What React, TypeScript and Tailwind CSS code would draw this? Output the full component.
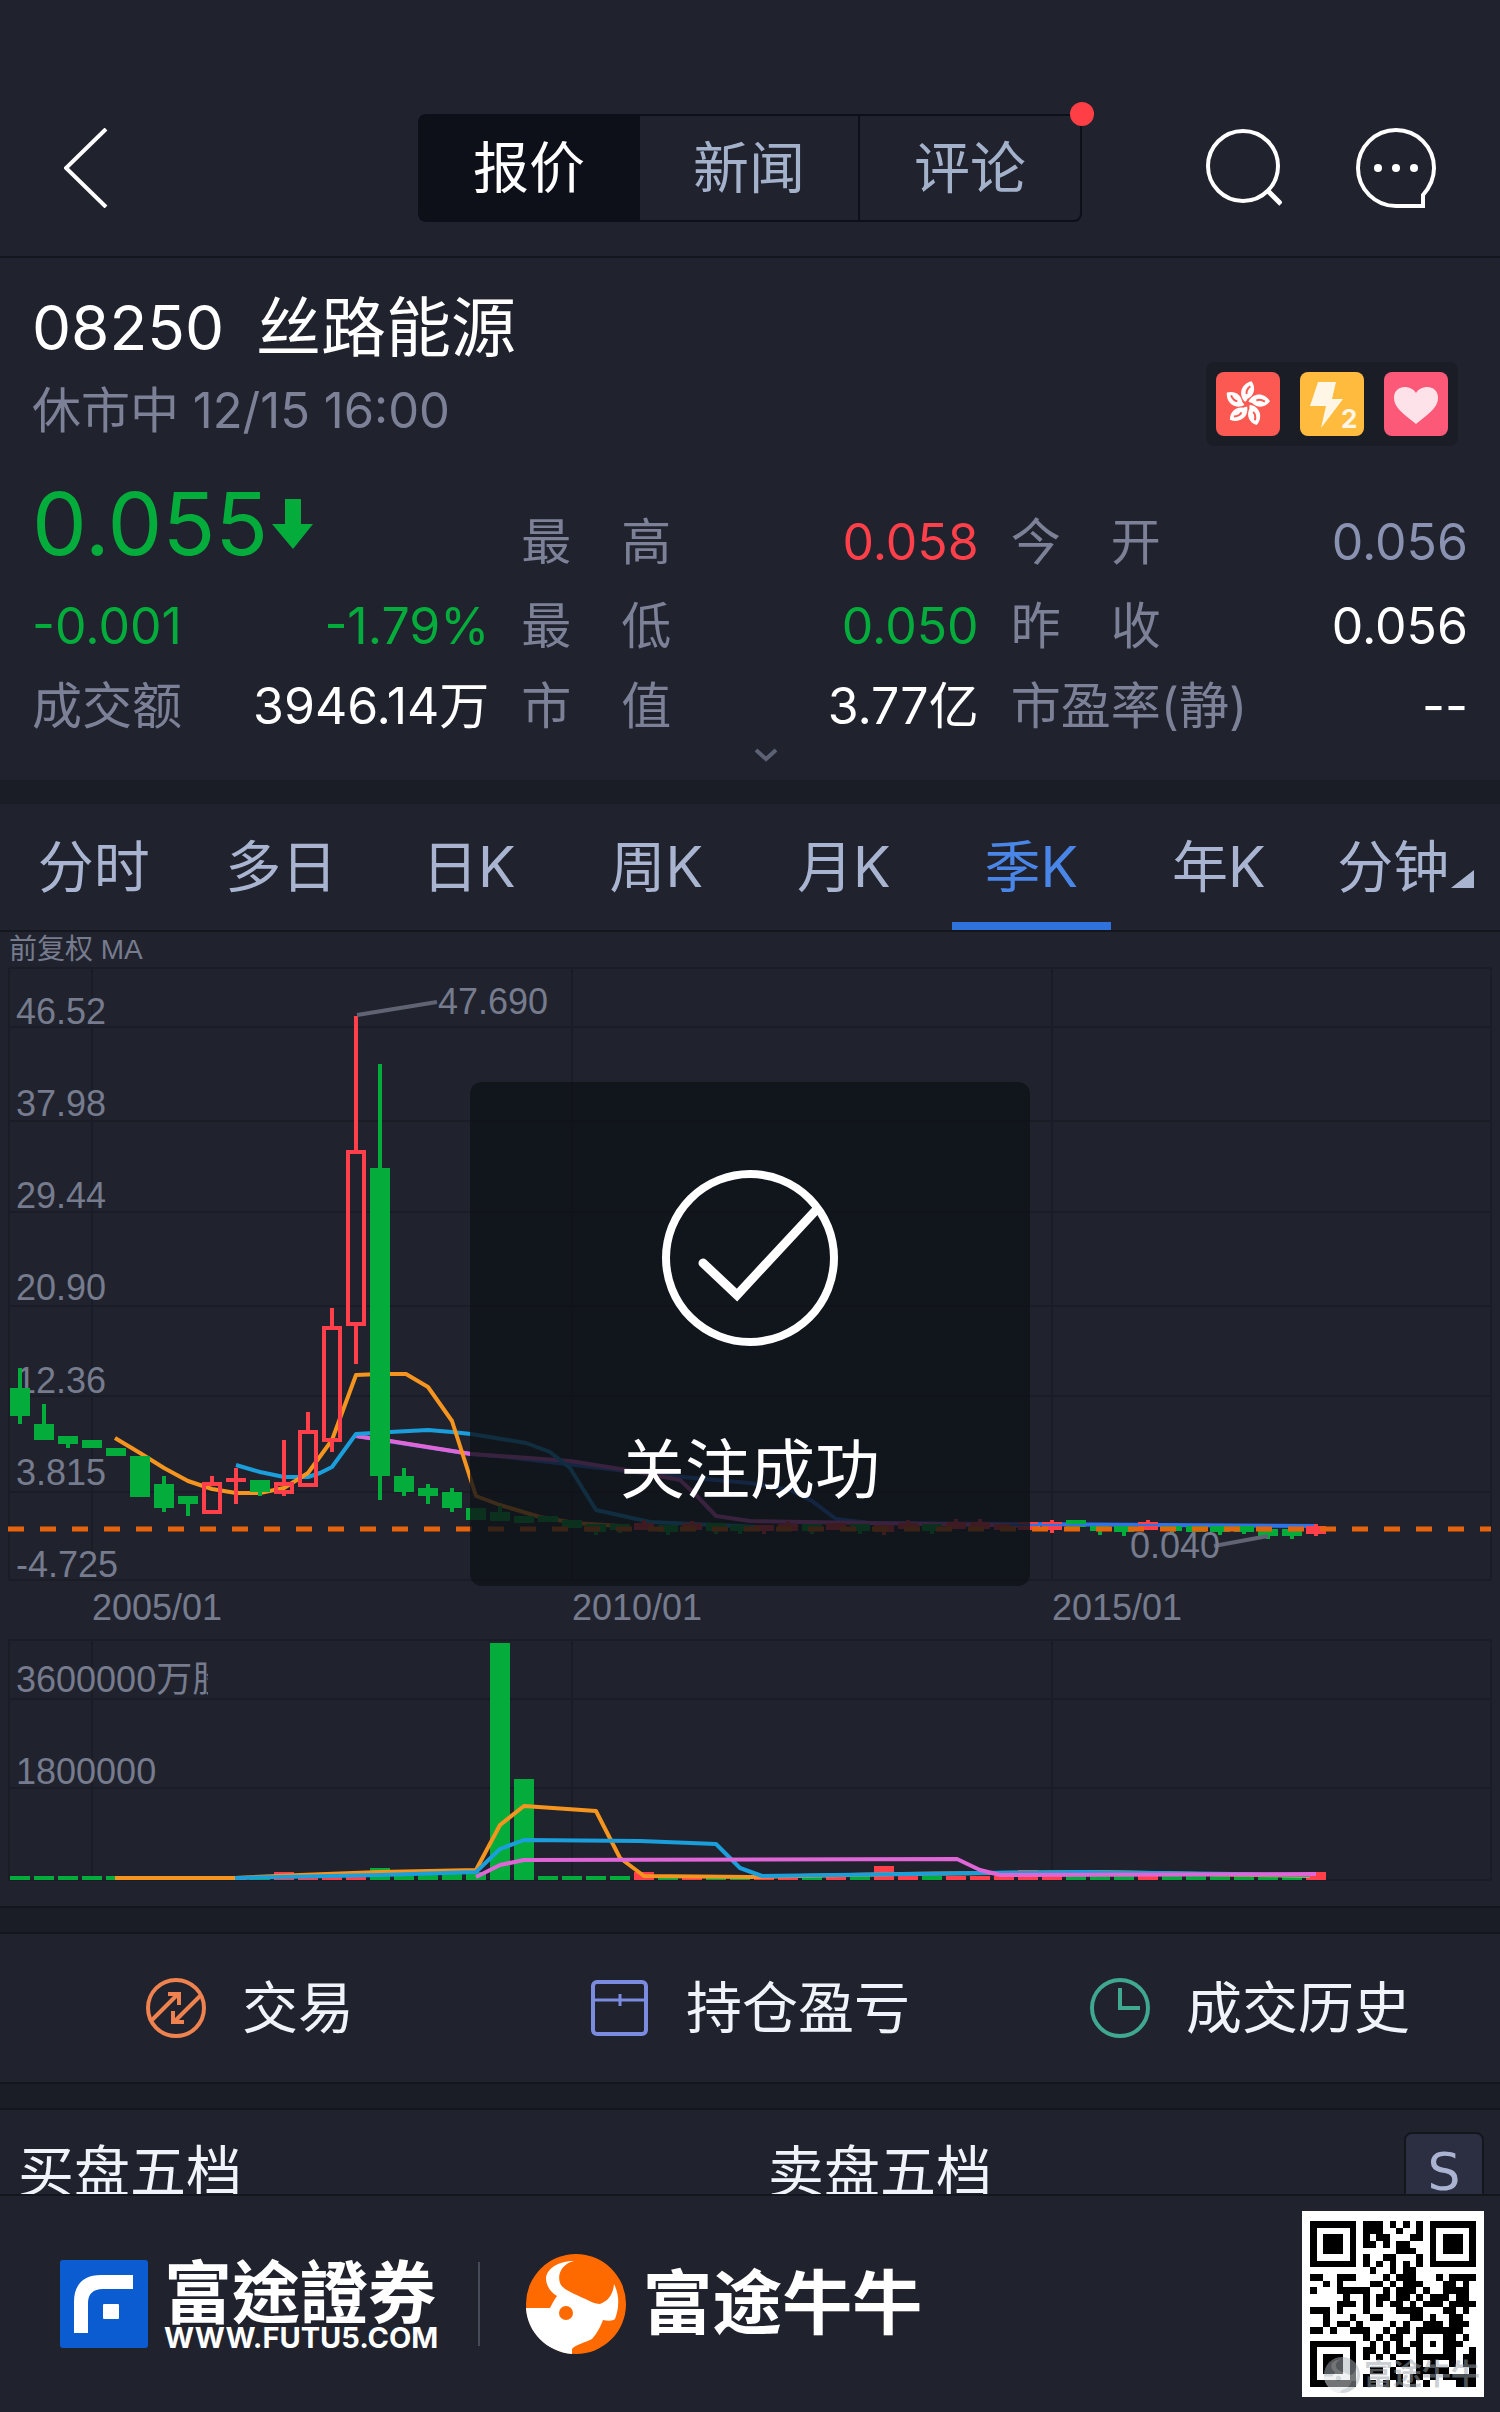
import { useState } from "react";
import type { ReactNode } from "react";

const PERIODS = ["分时", "多日", "日K", "周K", "月K", "季K", "年K"];
const SECTIONS = ["报价", "新闻", "评论"];

const GREEN = "#04ad3b";
const RED = "#ff3f4a";
const ORANGE = "#f59520";
const CYAN = "#1b9fdc";
const PINK = "#e066d8";
const BLUE = "#2f74e6";

const STEP = 24;
const FIRST_X = 20;

type Candle = {
  up?: boolean;
  solid?: boolean;
  top: number;
  bottom: number;
  high?: number;
  low?: number;
};

const candles: Candle[] = [
  { top: 1388, bottom: 1416, high: 1368, low: 1424 },
  { top: 1424, bottom: 1440, high: 1404 },
  { top: 1436, bottom: 1444, low: 1448 },
  { top: 1440, bottom: 1448 },
  { top: 1448, bottom: 1456 },
  { top: 1456, bottom: 1497 },
  { top: 1484, bottom: 1508, high: 1476, low: 1512 },
  { top: 1496, bottom: 1504, low: 1516 },
  { up: true, top: 1482, bottom: 1514, high: 1476 },
  { up: true, solid: true, top: 1478, bottom: 1482, high: 1468, low: 1504 },
  { top: 1480, bottom: 1492, low: 1496 },
  { up: true, top: 1482, bottom: 1494, high: 1440, low: 1496 },
  { up: true, top: 1430, bottom: 1487, high: 1412 },
  { up: true, top: 1326, bottom: 1442, high: 1308, low: 1452 },
  { up: true, top: 1150, bottom: 1326, high: 1016, low: 1364 },
  { top: 1168, bottom: 1476, high: 1064, low: 1500 },
  { top: 1476, bottom: 1492, high: 1468, low: 1496 },
  { top: 1488, bottom: 1496, high: 1484, low: 1504 },
  { top: 1492, bottom: 1508, high: 1488, low: 1512 },
  { top: 1508, bottom: 1520 },
  { top: 1512, bottom: 1521, high: 1506 },
  { top: 1516, bottom: 1523 },
  { top: 1516, bottom: 1522 },
  { top: 1520, bottom: 1528 },
  { top: 1524, bottom: 1532, low: 1535 },
  { top: 1524, bottom: 1530, low: 1533 },
  { up: true, solid: true, top: 1523, bottom: 1530, high: 1520 },
  { top: 1525, bottom: 1532, low: 1535 },
  { up: true, solid: true, top: 1523, bottom: 1530, high: 1521 },
  { top: 1523, bottom: 1531, low: 1534 },
  { top: 1525, bottom: 1531, low: 1534 },
  { up: true, solid: true, top: 1525, bottom: 1531, low: 1534 },
  { up: true, solid: true, top: 1524, bottom: 1531, high: 1521 },
  { top: 1524, bottom: 1531, low: 1534 },
  { up: true, solid: true, top: 1523, bottom: 1530 },
  { top: 1524, bottom: 1531, low: 1534 },
  { up: true, solid: true, top: 1525, bottom: 1532, low: 1535 },
  { up: true, solid: true, top: 1523, bottom: 1529, high: 1520 },
  { top: 1524, bottom: 1531, low: 1534 },
  { up: true, solid: true, top: 1522, bottom: 1529, high: 1519 },
  { up: true, solid: true, top: 1522, bottom: 1529, high: 1519 },
  { up: true, solid: true, top: 1524, bottom: 1530 },
  { up: true, solid: true, top: 1522, bottom: 1530 },
  { up: true, solid: true, top: 1522, bottom: 1530, high: 1520, low: 1533 },
  { top: 1520, bottom: 1527 },
  { top: 1524, bottom: 1531, low: 1535 },
  { top: 1525, bottom: 1532, low: 1536 },
  { up: true, solid: true, top: 1522, bottom: 1530, high: 1520 },
  { top: 1524, bottom: 1531, low: 1534 },
  { top: 1524, bottom: 1532 },
  { top: 1525, bottom: 1532, low: 1535 },
  { top: 1525, bottom: 1532, low: 1534 },
  { top: 1529, bottom: 1536, low: 1539 },
  { top: 1529, bottom: 1536, low: 1539 },
  { up: true, solid: true, top: 1526, bottom: 1534, high: 1524, low: 1536 },
];

// bars that stand above the 4px floor
const volumes: Record<number, number> = {
  11: 8,
  15: 12,
  17: 10,
  18: 7,
  19: 8,
  20: 237,
  21: 101,
  26: 8,
  36: 14,
  42: 10,
  54: 8,
};

const priceLabels = [
  ["46.52", 1024],
  ["37.98", 1116],
  ["29.44", 1208],
  ["20.90", 1300],
  ["12.36", 1393],
  ["3.815", 1485],
  ["-4.725", 1577],
] as const;

const gridRows = [968, 1027, 1121, 1212, 1306, 1396, 1492, 1580];
const volumeRows = [1640, 1699, 1788, 1880];
const gridCols = [9, 92, 572, 1052, 1491];

const QR = [
  "#######.###.#.#.#.#######",
  "#.....#.###..#..#.#.....#",
  "#.###.#.#.##...##.#.###.#",
  "#.###.#.##.#.##...#.###.#",
  "#.###.#......###..#.###.#",
  "#.....#.#..##...#.#.....#",
  "#######.#.#.#.#.#.#######",
  ".........#..#.##.........",
  "##..###....#.###...#.####",
  "..#.#....##.#.###...##.#.",
  "#...#####..#.###.#..####.",
  ".....#..#.##.##.#.###.##.",
  "....###.#.#.##.#.###.####",
  "###.#...#....####...##.#.",
  "..#...#..##....##.#..##..",
  "..#.##.#....#.#..###.###.",
  "##.#..###..#.##.#######..",
  "........#.#.##..#...##.#.",
  "#######..#.#.#.##.#.###..",
  "#.....#.##.#.##.#...##..#",
  "#.###.#.#.#.#...######.##",
  "#.###.#......##.#.#..#.##",
  "#.###.#..##.#...#####...#",
  "#.....#.#...##.##.#.#####",
  "#######.##.#.#.#.#....###",
];

const Header = () => {
  const [active, setActive] = useState("报价");
  return (
    <header className="flex h-[258px] items-center justify-between border-b-2 border-[#14161e] pt-20 pr-16 pl-16">
      <div className="flex flex-1">
        <button aria-label="返回" className="cursor-pointer">
          <svg width="44" height="80" viewBox="0 0 44 80" fill="none">
            <path d="M42 1 2 40l40 39" stroke="#fff" strokeWidth="4" />
          </svg>
        </button>
      </div>
      <nav className="relative flex h-[108px] rounded-lg border-2 border-[#0d1018]">
        {SECTIONS.map((item) => (
          <button
            key={item}
            onClick={() => setActive(item)}
            className={`w-[220px] cursor-pointer border-r-2 border-[#0d1018] text-[56px] leading-none last-of-type:border-r-0 ${
              item === active ? "bg-[#0d1018] text-white" : "text-[#a3b1cb]"
            }`}
          >
            {item}
          </button>
        ))}
        <span className="absolute -top-[14px] -right-[14px] h-6 w-6 rounded-full bg-[#ff3f45]" />
      </nav>
      <div className="flex flex-1 justify-end gap-[74px]">
        <button aria-label="搜索" className="cursor-pointer">
          <svg width="78" height="80" viewBox="0 0 78 80" fill="none" stroke="#fff" strokeWidth="4">
            <circle cx="39" cy="38" r="35" />
            <path d="M63 62 77 76" strokeWidth="5" />
          </svg>
        </button>
        <button aria-label="消息" className="cursor-pointer">
          <svg width="80" height="80" viewBox="0 0 80 80" fill="none">
            <path
              d="M67 78H40A38 38 0 1 1 78 40c0 11-4 19-11 27Z"
              stroke="#fff"
              strokeWidth="4"
            />
            <circle cx="22" cy="40" r="4" fill="#fff" />
            <circle cx="40" cy="40" r="4" fill="#fff" />
            <circle cx="58" cy="40" r="4" fill="#fff" />
          </svg>
        </button>
      </div>
    </header>
  );
};

const Badges = () => (
  <div className="flex h-[84px] items-center gap-5 rounded-lg bg-[#1a1d26] px-[10px]">
    <svg width="64" height="64" viewBox="0 0 64 64">
      <rect width="64" height="64" rx="8" fill="#fc5953" />
      {[0, 72, 144, 216, 288].map((angle) => (
        <g key={angle} transform={`rotate(${angle + 4} 31 32)`}>
          <path d="M29 30C21 23 24 12 34 9c5 6 4 14-3 18 0 1-1 2-2 3Z" fill="#fff" />
          <path d="M30 22c-1-3 1-6 3-8" stroke="#fc5953" strokeWidth="2" fill="none" />
        </g>
      ))}
    </svg>
    <svg width="64" height="64" viewBox="0 0 64 64">
      <rect width="64" height="64" rx="8" fill="#ffbb3d" />
      <path d="M18 10h18l-4 17h11L21 56l5-22H10Z" fill="#fff6e6" />
      <text x="41" y="56" fontSize="26" fontWeight="700" fill="#fff6e6">
        2
      </text>
    </svg>
    <svg width="64" height="64" viewBox="0 0 64 64">
      <rect width="64" height="64" rx="8" fill="#fc5878" />
      <path
        d="M32 52C18 41 10 35 10 26c0-13 16-14 22-5 6-9 22-8 22 5 0 9-8 15-22 26Z"
        fill="#fde3e9"
      />
    </svg>
  </div>
);

type StatProps = {
  label: string;
  value: string;
  spread?: boolean;
  valueClass?: string;
};

const Stat = ({ label, value, spread, valueClass = "text-white" }: StatProps) => (
  <div className="flex items-center justify-between self-end leading-[84px]">
    {spread ? (
      <span className="flex w-[150px] justify-between text-[#7c8198]">
        {label.split("").map((char) => (
          <span key={char}>{char}</span>
        ))}
      </span>
    ) : (
      <span className="text-[#7c8198]">{label}</span>
    )}
    <span className={valueClass}>{value}</span>
  </div>
);

const Quote = () => (
  <section className="px-8 pt-[30px]">
    <div className="flex items-end justify-between pr-[10px]">
      <div>
        <h1 className="flex gap-8 leading-[80px] text-white">
          <span className="text-[62px]">08250</span>
          <span className="text-[65px]">丝路能源</span>
        </h1>
        <p className="mt-2 text-[49px] leading-[70px] text-[#7c8198]">休市中 12/15 16:00</p>
      </div>
      <Badges />
    </div>
    <div className="mt-[38px] grid grid-cols-3 grid-rows-[100px_84px_80px] gap-x-8 text-[50px]">
      <div className="flex items-center gap-1 self-start text-[87px] leading-[80px] text-[#04ad3b]">
        0.055
        <svg width="42" height="50" viewBox="0 0 42 50" fill={GREEN}>
          <path d="M13 0h16v25h12L21 50 0 25h13Z" />
        </svg>
      </div>
      <Stat label="最高" value="0.058" spread valueClass="text-[#ff3f4a]" />
      <Stat label="今开" value="0.056" spread valueClass="text-[#8a92b2]" />
      <div className="flex items-center justify-between leading-[84px] text-[#04ad3b]">
        <span>-0.001</span>
        <span>-1.79%</span>
      </div>
      <Stat label="最低" value="0.050" spread valueClass="text-[#04ad3b]" />
      <Stat label="昨收" value="0.056" spread />
      <Stat label="成交额" value="3946.14万" />
      <Stat label="市值" value="3.77亿" spread />
      <Stat label="市盈率(静)" value="--" />
    </div>
    <button aria-label="展开" className="mx-auto flex h-8 w-14 cursor-pointer justify-end">
      <svg width="24" height="14" viewBox="0 0 24 14" fill="none">
        <path d="m2 2 10 9L22 2" stroke="#5c6175" strokeWidth="4" />
      </svg>
    </button>
  </section>
);

const PeriodTabs = () => {
  const [period, setPeriod] = useState("季K");
  return (
    <nav className="grid h-32 grid-cols-8 border-b-2 border-[#14161e] text-[56px] leading-none text-[#a9b5d0]">
      {PERIODS.map((item) => (
        <button
          key={item}
          onClick={() => setPeriod(item)}
          className={`relative cursor-pointer ${item === period ? "text-[#4a86e8]" : ""}`}
        >
          {item}
          {item === period && (
            <span className="absolute inset-x-[14px] bottom-0 h-2 bg-[#2f72de]" />
          )}
        </button>
      ))}
      <button className="flex cursor-pointer items-center justify-center">
        分钟
        <svg width="26" height="18" viewBox="0 0 26 18" className="mt-6" fill="#a9b5d0">
          <path d="M25 0v18H2Z" />
        </svg>
      </button>
    </nav>
  );
};

const Chart = () => (
  <svg
    viewBox="0 932 1500 974"
    className="block w-full font-['Liberation_Sans','Noto_Sans_CJK_SC',sans-serif]"
    fontSize="36"
    fill="#767b8e"
  >
    <defs>
      <clipPath id="volume-label">
        <rect x="0" y="1640" width="208" height="80" />
      </clipPath>
    </defs>
    <text x="9" y="959" fontSize="28">
      前复权 MA
    </text>
    <g stroke="#1a1d26" strokeWidth="2">
      {[...gridRows, ...volumeRows].map((y) => (
        <line key={y} x1="9" x2="1491" y1={y} y2={y} />
      ))}
      {gridCols.map((x) => (
        <path key={x} d={`M${x} 968V1580M${x} 1640V1880`} />
      ))}
    </g>

    {priceLabels.map(([label, y]) => (
      <text key={label} x="16" y={y}>
        {label}
      </text>
    ))}
    <text x="92" y="1620">2005/01</text>
    <text x="572" y="1620">2010/01</text>
    <text x="1052" y="1620">2015/01</text>
    <text x="16" y="1692" clipPath="url(#volume-label)">
      3600000万股
    </text>
    <text x="16" y="1784">1800000</text>

    <g fill="none" strokeWidth="4" strokeLinejoin="round">
      <polyline
        stroke={BLUE}
        points="356,1436 471,1454 507,1457 660,1475 750,1483 790,1490 812,1501 836,1519 870,1523 1316,1526"
      />
      <polyline
        stroke={PINK}
        points="356,1436 390,1441 471,1454 570,1461 627,1470 680,1480 696,1495 716,1516 750,1521 1040,1526"
      />
      <polyline
        stroke={CYAN}
        points="236,1465 260,1472 284,1477 308,1477 320,1473 332,1467 356,1434 390,1432 428,1430 452,1432 471,1434 526,1443 550,1452 570,1468 596,1510 650,1522 760,1527"
      />
      <polyline
        stroke={ORANGE}
        points="115,1438 140,1453 164,1468 188,1481 212,1489 236,1493 260,1493 284,1488 308,1473 332,1440 356,1375 380,1374 406,1374 428,1387 452,1421 476,1496 500,1505 540,1517 575,1523 620,1526"
      />
    </g>

    {candles.map(({ up, solid, top, bottom, high = top, low = bottom }, i) => {
      const x = FIRST_X + i * STEP;
      const color = up ? RED : GREEN;
      return (
        <g key={i} stroke={color} strokeWidth="4">
          <path d={`M${x} ${high}V${top}M${x} ${bottom}V${low}`} />
          {up && !solid ? (
            <rect x={x - 8} y={top + 2} width="16" height={bottom - top - 4} fill="none" />
          ) : (
            <rect
              x={x - 10}
              y={top}
              width="20"
              height={bottom - top}
              fill={color}
              stroke="none"
            />
          )}
        </g>
      );
    })}

    <path d="M1010 1525H1310" stroke={BLUE} strokeWidth="2" />
    <path d="M8 1529H1491" stroke="#e8640c" strokeWidth="5" strokeDasharray="16 16" />

    <g stroke="#5f6373" strokeWidth="4">
      <path d="M357 1015 437 1002" />
      <path d="M1214 1546 1268 1536" />
    </g>
    <text x="438" y="1014">47.690</text>
    <text x="1130" y="1558">0.040</text>

    {candles.map(({ up }, i) => {
      const height = volumes[i] ?? 4;
      return (
        <rect
          key={i}
          x={FIRST_X + i * STEP - 10}
          y={1880 - height}
          width="20"
          height={height}
          fill={up ? RED : GREEN}
        />
      );
    })}
    <g fill="none" strokeWidth="4" strokeLinejoin="round">
      <polyline
        stroke={ORANGE}
        points="115,1878 235,1878 300,1875 380,1872 476,1870 500,1825 524,1806 596,1811 620,1858 644,1876 750,1877 900,1874 1100,1872 1200,1874 1310,1876"
      />
      <polyline
        stroke={CYAN}
        points="235,1878 380,1875 476,1872 500,1849 524,1840 640,1841 716,1844 740,1868 762,1876 980,1873 1080,1872 1310,1875"
      />
      <polyline
        stroke={PINK}
        points="476,1877 500,1865 524,1860 957,1859 980,1870 1000,1875 1316,1874"
      />
    </g>
  </svg>
);

const Toast = () => (
  <div
    role="status"
    className="absolute top-[150px] left-1/2 flex h-[504px] w-[560px] -translate-x-1/2 flex-col items-center rounded-xl bg-[#0e1118]/80 pt-[88px] text-white"
  >
    <svg width="176" height="176" viewBox="0 0 176 176" fill="none" stroke="#fff">
      <circle cx="88" cy="88" r="84" strokeWidth="8" />
      <path d="m41 93 34 32 80-86" strokeWidth="9" strokeLinecap="round" />
    </svg>
    <p className="mt-[84px] text-[65px] leading-[80px]">关注成功</p>
  </div>
);

const Action = ({ label, children }: { label: string; children: ReactNode }) => (
  <button className="flex cursor-pointer items-center justify-center gap-9 text-[56px] leading-none text-[#f1f3fa]">
    <svg width="60" height="60" viewBox="0 0 60 60" fill="none" strokeWidth="4">
      {children}
    </svg>
    {label}
  </button>
);

const Actions = () => (
  <div className="grid h-[148px] grid-cols-3">
    <Action label="交易">
      <g stroke="#f0824f">
        <circle cx="30" cy="30" r="28" />
        <path d="M6 42 32 16M22 16h11v11M54 18 28 44M38 44H27V33" />
      </g>
    </Action>
    <Action label="持仓盈亏">
      <g stroke="#7b8be0">
        <rect x="3" y="4" width="53" height="52" rx="4" />
        <path d="M4 22H56" strokeWidth="3" />
        <path d="M30 16V28" strokeWidth="3" />
      </g>
    </Action>
    <Action label="成交历史">
      <g stroke="#3fa88f">
        <circle cx="30" cy="30" r="28" />
        <path d="M30 10V30H50" />
      </g>
    </Action>
  </div>
);

const OrderBook = () => (
  <div className="flex h-[84px] items-start overflow-hidden pt-[22px] text-[56px] leading-[80px] text-[#f1f3fa]">
    <h2 className="w-1/2 pl-[18px]">买盘五档</h2>
    <h2 className="w-1/2 pl-[18px]">卖盘五档</h2>
    <button className="mr-4 -ml-24 h-20 w-20 shrink-0 cursor-pointer rounded-lg border-2 border-[#14161e] bg-[#2b2f41] font-['DejaVu_Sans',sans-serif] text-[52px] leading-[76px] text-[#aab4d2]">
      S
    </button>
  </div>
);

const BullMark = ({ className, disc, mark }: { className: string; disc: string; mark: string }) => (
  <svg className={className} viewBox="0 0 100 100">
    <circle cx="50" cy="50" r="50" fill={disc} />
    <path
      d="M48 7C36 10 31 20 34 29c3 7 13 10 23 15 7 3 12 6 17 6 8-3 13-9 14-20 6 12 5 24 1 35-2 2-7 2-12 1-3 8-6 13-11 19-7 4-16 5-20 10v5C21 98 1 78 0 54h24c2-4 4-8 7-12-7-4-11-11-11-18C21 14 33 7 48 7Z"
      fill={mark}
    />
    <circle cx="40" cy="59" r="7" fill={disc} />
  </svg>
);

const QrCode = () => (
  <div className="relative flex h-[186px] w-[182px] items-center justify-center bg-white">
    <svg width="166" height="166" viewBox="0 0 25 25" shapeRendering="crispEdges">
      {QR.map((row, y) =>
        row
          .split("")
          .map((cell, x) =>
            cell === "#" ? <rect key={`${x}-${y}`} x={x} y={y} width="1" height="1" /> : null
          )
      )}
    </svg>
    <div className="absolute right-1 bottom-1 flex items-center gap-1 opacity-50">
      <BullMark className="h-9 w-9" disc="#a9b2ba" mark="#e3e7ea" />
      <span className="text-[29px] leading-9 font-bold text-[#9aa3ab]">富途牛牛</span>
    </div>
  </div>
);

const Footer = () => (
  <footer className="flex h-[218px] items-center border-t-2 border-[#14161e] pr-4 pl-[60px] text-white">
    <svg width="88" height="88" viewBox="0 0 88 88">
      <rect width="88" height="88" rx="3" fill="#0b5cd0" />
      <path d="M14 73V42C14 24 24 15 41 15H73V29H43C33 29 28 34 28 43V73Z" fill="#fff" />
      <rect x="43" y="44" width="16" height="15" rx="1" fill="#fff" />
    </svg>
    <div className="ml-4 flex flex-col">
      <span className="font-['Noto_Sans_CJK_TC',sans-serif] text-[68px] leading-[68px] font-bold">
        富途證券
      </span>
      <span className="text-[29px] leading-[30px] font-bold">WWW.FUTU5.COM</span>
    </div>
    <span className="ml-10 h-[84px] w-[2px] bg-[#474b57]" />
    <BullMark className="ml-[46px] h-[100px] w-[100px]" disc="#ff6a00" mark="#ffffff" />
    <span className="ml-4 text-[70px] leading-[100px] font-bold">富途牛牛</span>
    <div className="ml-auto">
      <QrCode />
    </div>
  </footer>
);

const Divider = () => <div className="h-7 border-y-2 border-[#14161e] bg-[#1a1d26]" />;

export default function App() {
  return (
    <div className="w-full bg-[#20232d] font-['Inter','Noto_Sans_CJK_SC',sans-serif]">
      <Header />
      <Quote />
      <div className="h-6 bg-[#1a1d26]" />
      <PeriodTabs />
      <div className="relative">
        <Chart />
        <Toast />
      </div>
      <Divider />
      <Actions />
      <Divider />
      <OrderBook />
      <Footer />
    </div>
  );
}
